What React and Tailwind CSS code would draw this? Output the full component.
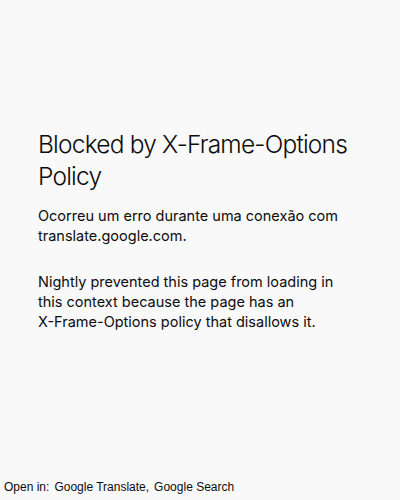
export default function App() {
  return (
    <div className="h-[500px] w-[400px] bg-[#f9f9fa] text-[#0c0c0d] flex flex-col overflow-hidden" style={{ fontFamily: 'Inter, "Noto Sans", sans-serif' }}>
      <div className="flex-1 pl-[38px] pr-[20px] pt-[128px]">
        <h1 className="text-[24.5px] leading-[32px] font-light tracking-[-0.8px]">Blocked by X-Frame-Options Policy</h1>
        <p className="mt-[14px] text-[14.5px] leading-[20px] max-w-[320px]">Ocorreu um erro durante uma conexão com translate.google.com.</p>
        <p className="mt-[26px] text-[14.5px] leading-[20px] max-w-[310px]">
          Nightly prevented this page from loading in this context because the page has an{' '}
          <span className="whitespace-nowrap">X-Frame-Options</span> policy that disallows it.
        </p>
      </div>
      <div className="flex gap-[5px] px-[4px] pb-[5px] text-[12px] leading-[16px]" style={{ fontFamily: '"Liberation Sans", Arial, sans-serif' }}>
        <span>Open in:</span>
        <span>Google Translate,</span>
        <span>Google Search</span>
      </div>
    </div>
  );
}
